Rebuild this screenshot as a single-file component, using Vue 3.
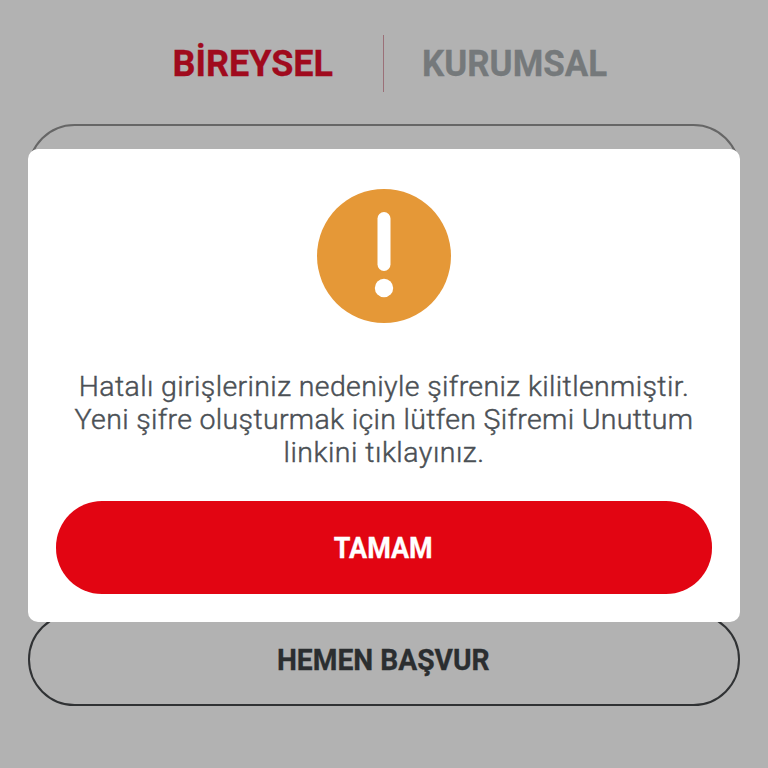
<script setup>
import { ref } from 'vue'

const sekmeler = [
  { id: 'bireysel', baslik: 'BİREYSEL' },
  { id: 'kurumsal', baslik: 'KURUMSAL' },
]

const mesajSatirlari = [
  'Hatalı girişleriniz nedeniyle şifreniz kilitlenmiştir.',
  'Yeni şifre oluşturmak için lütfen Şifremi Unuttum',
  'linkini tıklayınız.',
]

const aktifSekme = ref('bireysel')
const uyariAcik = ref(true)

function uyariyiKapat() {
  uyariAcik.value = false
}
</script>

<template>
  <div class="sayfa">
    <nav class="sekmeler">
      <button
        v-for="{ id, baslik } in sekmeler"
        :key="id"
        class="sekme"
        :class="[id, { aktif: aktifSekme === id }]"
        @click="aktifSekme = id"
      >
        <span>{{ baslik }}</span>
      </button>
    </nav>

    <main class="icerik">
      <div class="alan" />
      <button class="basvur"><span>HEMEN BAŞVUR</span></button>
    </main>

    <div v-if="uyariAcik" class="perde">
      <section class="uyari" role="alertdialog">
        <svg class="uyari-ikon" viewBox="0 0 134 134">
          <circle cx="67" cy="67" r="67" fill="#e59837" />
          <rect x="60.5" y="23" width="13" height="59" rx="6.5" fill="#fff" />
          <circle cx="67" cy="99" r="9.2" fill="#fff" />
        </svg>

        <p class="mesaj">
          <span
            v-for="(satir, idx) in mesajSatirlari"
            :key="`satir-${idx}`"
            class="satir"
            :class="`satir-${idx + 1}`"
          >{{ satir }}</span>
        </p>

        <button class="tamam" @click="uyariyiKapat"><span>TAMAM</span></button>
      </section>
    </div>
  </div>
</template>

<style>
body {
  background: #b2b2b2;
}
</style>

<style scoped>
.sayfa {
  position: relative;
  box-sizing: border-box;
  width: 768px;
  height: 768px;
  padding: 35px 28px 0;
  overflow: hidden;
  background: #b2b2b2;
  font-family: Roboto, 'Liberation Sans', sans-serif;
}

button {
  margin: 0;
  padding: 0;
  border: none;
  background: none;
  font-family: inherit;
  font-weight: 700;
  white-space: nowrap;
  -webkit-text-stroke: 0.3px currentColor;
}

button span {
  display: inline-block;
}

.sekmeler {
  display: grid;
  grid-template-columns: 1fr 1fr;
  height: 57px;
}

.sekme {
  display: flex;
  align-items: center;
  color: #75797b;
  font-size: 36.5px;
  line-height: 57px;
}

.sekme.aktif {
  color: #a00a1d;
}

.sekme.bireysel {
  justify-content: flex-end;
  padding-right: 50px;
  border-right: 1px solid #9b7078;
}

.sekme.bireysel span {
  transform: scaleX(0.985);
  transform-origin: right;
}

.sekme.kurumsal {
  padding-left: 38px;
}

.sekme.kurumsal span {
  transform: scaleX(0.957);
  transform-origin: left;
}

.icerik {
  display: flex;
  flex-direction: column;
  justify-content: space-between;
  height: 582px;
  margin-top: 32px;
}

.alan,
.basvur {
  box-sizing: border-box;
  height: 93px;
  border: 2px solid #666;
  border-radius: 47px;
}

.basvur {
  padding-right: 2px;
  border-color: #303234;
  color: #2b2e30;
  font-size: 29px;
}

.basvur span {
  transform: scaleX(0.973);
}

.perde {
  position: absolute;
  inset: 0;
  padding: 149px 28px 0;
}

.uyari {
  display: flex;
  box-sizing: border-box;
  flex-direction: column;
  align-items: center;
  height: 473px;
  padding: 40px 28px 28px;
  border-radius: 10px;
  background: #fff;
}

.uyari-ikon {
  display: block;
  flex: none;
  width: 134px;
  height: 134px;
}

.mesaj {
  display: flex;
  flex-direction: column;
  align-items: center;
  margin: 47px 0 0;
  color: #4b5055;
  font-size: 28.5px;
  font-weight: 300;
  line-height: 33px;
  white-space: nowrap;
  -webkit-text-stroke: 0.45px currentColor;
}

.satir-1 {
  letter-spacing: 0.38px;
}

.satir-2 {
  letter-spacing: 0.34px;
}

.satir-3 {
  letter-spacing: 0.5px;
}

.tamam {
  width: 656px;
  height: 93px;
  padding-right: 2px;
  margin-top: auto;
  border-radius: 46px;
  background: #e20512;
  color: #fff;
  font-size: 29px;
}

.tamam span {
  transform: scaleX(0.93);
}
</style>
